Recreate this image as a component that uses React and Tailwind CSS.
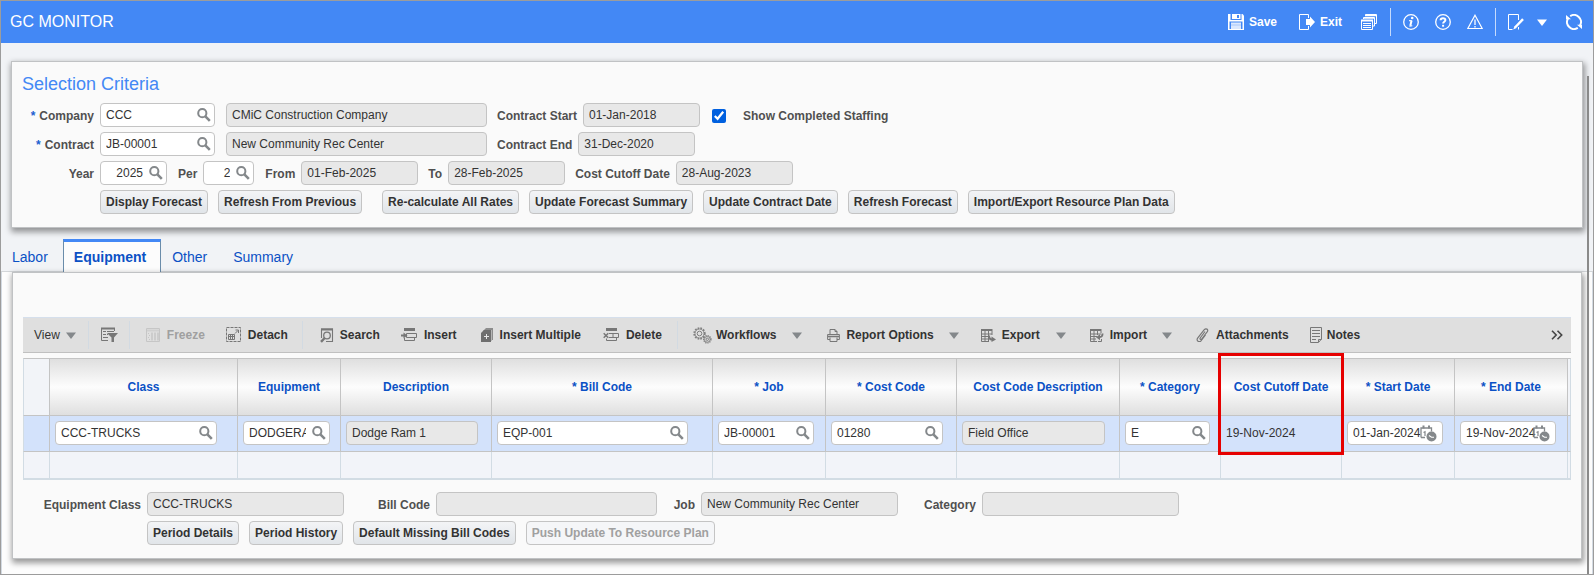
import React from "react";

const SearchIcon = () => (
  <svg width="14" height="14" viewBox="0 0 14 14" fill="none" stroke="#84888b">
    <circle cx="5.3" cy="5.2" r="4.1" strokeWidth="2" />
    <path d="M8.4 8.4 12.8 12.8" strokeWidth="2.6" />
  </svg>
);

const DateIcon = () => (
  <svg width="17" height="17" viewBox="0 0 17 17" fill="none">
    <path d="M1 12.500V3h10.500v3.500M1 12.500h4" stroke="#84888b" strokeWidth="1.300" />
    <path d="M3.500 .5v3M9 .5v3" stroke="#84888b" strokeWidth="2" />
    <path d="M3.500 7.500 5 6.800V11" stroke="#84888b" strokeWidth="1.200" />
    <circle cx="11.500" cy="11.500" r="5" fill="#84888b" />
    <path d="M9 10.500 11.500 12.200H14" stroke="#fff" strokeWidth="1.100" />
  </svg>
);

const Caret = ({ className = "text-[#84888b]" }) => (
  <svg width="10" height="7" viewBox="0 0 10 7" className={className}>
    <path d="M0 .5h10L5 7z" fill="currentColor" />
  </svg>
);

/* ---- application bar icons ---- */

const SaveIcon = () => (
  <svg width="16" height="16" viewBox="0 0 16 16">
    <path d="M0 0h14.500L16 1.500V16H0z" fill="#fff" />
    <path d="M2.500 0h11v6h-11z" fill="#4388f5" />
    <path d="M4 0h8.500v5H4z" fill="#fff" />
    <path d="M9 1h2v3H9z" fill="#4388f5" />
    <path d="M1.500 7.500h13V15h-13z" fill="#4388f5" />
    <path d="M3 8.500h10V15H3z" fill="#dbe8fe" />
    <path d="M3 10.500h10v1H3z" fill="#a9c8fb" />
  </svg>
);

const ExitIcon = () => (
  <svg width="16" height="16" viewBox="0 0 16 16" fill="none">
    <path d="M9.500 4V.5h-9v15h9V12" stroke="#fff" />
    <path d="M7 5h4V2.500L16 8l-5 5.500V11H7z" fill="#fff" />
  </svg>
);

const WindowsIcon = () => (
  <svg width="16" height="16" viewBox="0 0 16 16" fill="none" stroke="#fff">
    <path d="M4.500 2V.5h11v9H14" />
    <path d="M4 1.500h11" strokeWidth="1.500" />
    <path d="M2.500 5V3.500h11V12H12" />
    <path d="M3 4h10" strokeWidth="1.500" />
    <path d="M.5 6.500h11v9H.5z" />
    <path d="M0 6.500h12" strokeWidth="2" />
    <path d="M2 9.500h8M2 11.500h8M2 13.500h8" />
  </svg>
);

const InfoIcon = () => (
  <svg width="16" height="16" viewBox="0 0 16 16" fill="none" stroke="#fff">
    <circle cx="8" cy="8" r="7.300" strokeWidth="1.300" />
    <circle cx="9.200" cy="4" r="1.300" fill="#fff" stroke="none" />
    <path d="M6 6.700h2.700" strokeWidth="1.100" />
    <path d="M8.600 6.500 7.300 11.800" strokeWidth="2" />
    <path d="M6.400 12.300 9.300 11.800" strokeWidth="1.100" />
  </svg>
);

const HelpIcon = () => (
  <svg width="16" height="16" viewBox="0 0 16 16" fill="none" stroke="#fff">
    <circle cx="8" cy="8" r="7.300" strokeWidth="1.300" />
    <path d="M5.600 6.300C5.600 3.500 10.400 3.500 10.400 6c0 1.700-2.300 1.700-2.300 3.600" strokeWidth="2" />
    <path d="M7.100 10.800h2v1.900h-2z" fill="#fff" stroke="none" />
  </svg>
);

const WarnIcon = () => (
  <svg width="16" height="16" viewBox="0 0 16 16" fill="none" stroke="#fff">
    <path d="M8 1.200 15.200 14.500H.8z" strokeWidth="1.200" />
    <path d="M8 5.500V11M8 12v1.500" strokeWidth="1.300" />
  </svg>
);

const EditIcon = () => (
  <svg width="16" height="16" viewBox="0 0 16 16" fill="none" stroke="#fff">
    <path d="M10.500 6V.5H.5v15h4" />
    <path d="M7 13.500 15 5.200" strokeWidth="2.400" />
    <path d="M5.200 15.500 8.500 14 6.600 12.200z" fill="#fff" stroke="none" />
    <path d="M10.500 15.500V13" />
  </svg>
);

const RefreshIcon = () => (
  <svg width="16" height="16" viewBox="0 0 16 16" fill="none" stroke="#fff" strokeWidth="1.900">
    <path d="M4.200 2.100A7 7 0 0 1 14 11.500M11.800 13.900A7 7 0 0 1 2 4.500" />
    <path d="M11 10.800h5v4.200zM5 5.200H0V1z" fill="#fff" stroke="none" />
  </svg>
);

/* ---- table toolbar icons ---- */

const FilterIcon = () => (
  <svg width="17" height="16" viewBox="0 0 17 16" fill="none" stroke="#777">
    <path d="M0 1.500h14" strokeWidth="2" />
    <path d="M.5 2v11.500H7M13.500 2v2M2 4.500h3M6 4.500h7M2 7.500h3M2 10.500h3M5 10.500h2M6 7.500h1" />
    <path d="M6 6h11l-4 4.500V15h-2.500v-4.500z" fill="#777" stroke="none" />
  </svg>
);

const FreezeIcon = () => (
  <svg width="15" height="14" viewBox="0 0 15 14" fill="none" stroke="#c6c6c6">
    <path d="M.5.5h13v13H.5z" />
    <path d="M1 2.500h12" strokeWidth="2" stroke="#d0d0d0" />
    <path d="M6 4.500v8M9 4.500v8M12 4.500v8" strokeWidth="1.500" />
    <path d="M2 5.500h1M3 7.500h1M2 9.500h1M3 11.500h1" />
  </svg>
);

const DetachIcon = () => (
  <svg width="16" height="16" viewBox="0 0 16 16" fill="none" stroke="#777">
    <path d="M.5.5h14v14H.5z" strokeDasharray="3 1" />
    <path d="M2.500 7.500h6v5h-6zM2.500 9.500h6M4.500 8v5M6.500 8v5" />
    <path d="M9 6.500 12 3.500M9.500 3h3v3" />
  </svg>
);

const FindIcon = () => (
  <svg width="14" height="15" viewBox="0 0 14 15" fill="none" stroke="#777">
    <path d="M1.500 10V1h11v12.500H6" strokeWidth="1.100" />
    <path d="M1 1.500h12" strokeWidth="2" />
    <circle cx="7" cy="7.500" r="3.300" strokeWidth="1.300" />
    <path d="M4.700 10 1 13.800" strokeWidth="2.400" />
  </svg>
);

const InsertIcon = () => (
  <svg width="17" height="14" viewBox="0 0 17 14" fill="none" stroke="#777">
    <path d="M3 1.500h11" strokeWidth="3" />
    <path d="M5.500 5.500h10v4h-10z" />
    <path d="M0 7.500h4" strokeWidth="2" />
    <path d="M2.500 4.500 6.500 7.500 2.500 10.500z" fill="#777" stroke="none" />
    <path d="M3.500 10v2.500h10V10" />
  </svg>
);

const InsertMultipleIcon = () => (
  <svg width="13" height="14" viewBox="0 0 13 14" fill="none">
    <path d="M5 0h7v12H2V3z" fill="#8c8c8c" />
    <path d="M3 2h7v12H0V5z" fill="#6f6f6f" />
    <path d="M3 8.500h5M5.500 6v5" stroke="#e8e8e8" />
    <path d="M10.500 2v11" stroke="#b5b5b5" />
  </svg>
);

const DeleteIcon = () => (
  <svg width="17" height="14" viewBox="0 0 17 14" fill="none" stroke="#777">
    <path d="M3 1.500h11" strokeWidth="3" />
    <path d="M6 5.500h9.500v4H6" />
    <path d="m.7 5.200 4.600 4.600M5.300 5.200.7 9.800" strokeWidth="1.500" />
    <path d="M3.500 10.500v2h10V10M10 5.500v4" />
  </svg>
);

const GearsIcon = () => (
  <svg width="19" height="17" viewBox="0 0 19 17" fill="none" stroke="#808080">
    <circle cx="6.500" cy="6.500" r="5.300" strokeWidth="1.800" strokeDasharray="1.700 1.100" />
    <circle cx="6.500" cy="6.500" r="4.500" strokeWidth=".8" />
    <circle cx="6.500" cy="6.500" r="2.300" />
    <circle cx="14.300" cy="12.300" r="3.600" strokeWidth="1.400" strokeDasharray="1.300 .8" />
    <circle cx="14.300" cy="12.300" r="2.800" strokeWidth=".8" />
    <circle cx="14.300" cy="12.300" r="1.200" />
  </svg>
);

const PrintIcon = () => (
  <svg width="13" height="13" viewBox="0 0 13 13" fill="none" stroke="#777">
    <path d="M3 5V.5h5L10 2.500V5M8 .5v2h2" />
    <path d="M3 10.500H.6v-5h11.800v5H10" />
    <path d="M1 7.500h11" strokeWidth="1.500" />
    <path d="M3 8.500v4h7v-4" />
  </svg>
);

const ExportIcon = () => (
  <svg width="15" height="13" viewBox="0 0 15 13" fill="none" stroke="#777">
    <path d="M0 1h11.500" strokeWidth="2" />
    <path d="M.5 2v10.500H8M.5 5h10.500M.5 7.500H8M.5 10H7M4 2v10.500M7.500 2v10M11 2v4" />
    <path d="M8 6.500c0 3 1 4 3 4" strokeWidth="2" />
    <path d="M10.500 7.500 15 10.500 10.500 13z" fill="#777" stroke="none" />
  </svg>
);

const ImportIcon = () => (
  <svg width="14" height="13" viewBox="0 0 14 13" fill="none" stroke="#777">
    <path d="M0 1h11.500" strokeWidth="2" />
    <path d="M.5 2v10.500H7M.5 5h10.500M.5 7.500H7M.5 10H6M4 2v10.500M7.500 2v4M11 2v2" />
    <path d="M12.500 4.500c0 3-1 3.500-3.500 3.500" strokeWidth="2" />
    <path d="M10 5.200 6 8.200l4 3z" fill="#777" stroke="none" />
    <path d="M8 12.500h3.500V10" />
  </svg>
);

const ClipIcon = () => (
  <svg width="13" height="14" viewBox="0 0 13 14" fill="none" stroke="#777" strokeWidth="1.200">
    <path d="M9 3.500 4.200 10c-.8 1.200.7 2 1.500 1L11.300 3.700C12.800 1.500 10 -.3 8.300 1.700L1.800 9.800C-.5 13 3.500 15 5.300 12.500L9.500 7" />
  </svg>
);

const NotesIcon = () => (
  <svg width="13" height="16" viewBox="0 0 13 16" fill="none" stroke="#777">
    <path d="M.5.5h11v11.500L8.500 15.500H.5z" />
    <path d="M8.500 15V12.500h3" />
    <path d="M2 3.500h8M2 6.500h8M2 9.500h8M2 12.500h4" />
  </svg>
);

const MoreIcon = () => (
  <svg width="12" height="10" viewBox="0 0 12 10" fill="none" stroke="#444" strokeWidth="1.600">
    <path d="M1 .7 5.200 5 1 9.300M6.500.7 10.700 5 6.500 9.300" />
  </svg>
);

/* ---- form parts ---- */

function Label({ htmlFor, required, className = "", children }) {
  return (
    <label htmlFor={htmlFor} className={`shrink-0 pt-0.5 text-right font-bold text-[#505050] ${className}`}>
      {required && <span className="mr-1 text-[#1b5fd0]">*</span>}
      {children}
    </label>
  );
}

function Lookup({ id, value, width, label, align = "" }) {
  return (
    <div className={`flex h-6 shrink-0 items-center rounded border border-[#c4c4c4] bg-white pr-[3px] pl-[5px] ${width}`}>
      <input id={id} aria-label={label} defaultValue={value} className={`w-0 min-w-0 flex-1 bg-transparent outline-none ${align}`} />
      <button type="button" aria-label="Search values" className="ml-1.5 shrink-0">
        <SearchIcon />
      </button>
    </div>
  );
}

function ReadOnly({ id, value, width, label }) {
  return (
    <input
      id={id}
      aria-label={label}
      readOnly
      defaultValue={value}
      className={`h-6 shrink-0 rounded border border-[#c4c4c4] bg-[#e8e8e8] px-[5px] outline-none ${width}`}
    />
  );
}

function DateField({ value, label }) {
  return (
    <div className="flex h-6 w-24 items-center rounded border border-[#c4c4c4] bg-white px-[5px]">
      <input aria-label={label} defaultValue={value} className="w-0 min-w-0 flex-1 bg-transparent outline-none" />
      <button type="button" aria-label="Select date" className="-ml-[3px] shrink-0">
        <DateIcon />
      </button>
    </div>
  );
}

function Action({ className = "", disabled, children }) {
  return (
    <button
      type="button"
      disabled={disabled}
      className={`h-6 shrink-0 rounded border border-[#c4c4c4] px-[5px] font-bold whitespace-nowrap ${
        disabled ? "bg-[#f5f6f8] text-[#a0a0a0]" : "bg-linear-to-b from-[#f3f4f6] to-[#e1e5e9]"
      } ${className}`}
    >
      {children}
    </button>
  );
}

const Separator = ({ className = "" }) => <span className={`h-7 w-px shrink-0 bg-[#d2dae2] ${className}`} />;

function Tool({ icon, children, className = "", gap = "gap-1.5", disabled }) {
  return (
    <button
      type="button"
      disabled={disabled}
      className={`flex shrink-0 items-center font-bold whitespace-nowrap ${gap} ${disabled ? "text-[#a0a0a0]" : ""} ${className}`}
    >
      {icon}
      {children}
    </button>
  );
}

const columns = [
  ["Class", "w-[188px]"],
  ["Equipment", "w-[103px]"],
  ["Description", "w-[151px]"],
  ["* Bill Code", "w-[221px]"],
  ["* Job", "w-[113px]"],
  ["* Cost Code", "w-[131px]"],
  ["Cost Code Description", "w-[163px]"],
  ["* Category", "w-[101px]"],
  ["Cost Cutoff Date", "w-[121px]"],
  ["* Start Date", "w-[113px]"],
  ["* End Date", "w-[113px]"],
];

const cells = [
  <Lookup value="CCC-TRUCKS" width="w-[162px]" label="Class" />,
  <Lookup value="DODGERAM" width="w-[87px]" label="Equipment" />,
  <ReadOnly value="Dodge Ram 1" width="w-[132px]" label="Description" />,
  <Lookup value="EQP-001" width="w-[191px]" label="Bill Code" />,
  <Lookup value="JB-00001" width="w-24" label="Job" />,
  <Lookup value="01280" width="w-28" label="Cost Code" />,
  <ReadOnly value="Field Office" width="w-[143px]" label="Cost Code Description" />,
  <Lookup value="E" width="w-[85px]" label="Category" />,
  <span>19-Nov-2024</span>,
  <DateField value="01-Jan-2024" label="Start Date" />,
  <DateField value="19-Nov-2024" label="End Date" />,
];

function EquipmentTable() {
  return (
    <table className="mt-[5px] w-full table-fixed border-separate border-spacing-0">
      <thead>
        <tr className="h-[58px]">
          <th className="w-[27px] border border-[#c4c4c4] border-l-[#d2dce4] bg-[#f2f4f8]" />
          {columns.map(([name, width]) => (
            <th
              key={name}
              className={`relative border-t border-r border-b border-[#c4c4c4] bg-linear-to-b from-[#dfdfdf] via-[#fdfdfd] to-[#dfdfdf] p-0 text-center text-[#0b51c5] ${width}`}
            >
              {name}
              {name === "Cost Cutoff Date" && (
                <span className="pointer-events-none absolute -top-1.5 -left-[3px] z-10 h-[102px] w-[126px] border-3 border-[#e60000]" />
              )}
            </th>
          ))}
          <th className="w-[3px] border-t border-r border-b border-[#c4c4c4] border-r-[#d2dce4] bg-[#f2f4f8] p-0" />
        </tr>
      </thead>
      <tbody>
        <tr className="h-9 bg-[#d3e2fb]">
          <td className="border-r border-b border-l border-[#c4c4c4] border-l-[#d2dce4] p-0" />
          {cells.map((cell, i) => (
            <td key={i} className="border-r border-b border-[#c4c4c4] pt-[5px] pr-0 pb-0 pl-[5px] align-top">
              <div className="flex h-6 items-center">{cell}</div>
            </td>
          ))}
          <td className="border-r border-b border-[#c4c4c4] border-r-[#d2dce4] p-0" />
        </tr>
        <tr className="h-7 bg-[#f2f4f9]">
          <td className="border-r border-b-2 border-l border-[#d2dce4] p-0" />
          {cells.map((_, i) => (
            <td key={i} className="border-r border-b-2 border-[#d2dce4] p-0" />
          ))}
          <td className="border-r border-b-2 border-[#d2dce4] p-0" />
        </tr>
      </tbody>
    </table>
  );
}

const panel = "border border-[#c0c2c4] bg-[#fafafa] shadow-[1px_3px_6px_1px_rgba(0,0,0,0.4)]";

const tab = "flex items-center border-t-3";

export default function App() {
  return (
    <div className="relative flex min-h-screen flex-col border border-[#9c9c9c] bg-[#f1f3f6] font-['Liberation_Sans',Arial,sans-serif] text-xs text-[#333]">
      <header className="flex h-[42px] shrink-0 items-center bg-[#4388f5] pr-[11px] pl-[9px] font-bold text-white">
        <h1 className="mr-auto text-base font-normal">GC MONITOR</h1>
        <button type="button" className="flex items-center gap-[5px]"><SaveIcon />Save</button>
        <button type="button" className="ml-[22px] flex items-center gap-[5px]"><ExitIcon />Exit</button>
        <button type="button" aria-label="Windows" className="ml-[19px]"><WindowsIcon /></button>
        <span className="ml-[13px] h-7 w-px bg-[#c5dafc]" />
        <button type="button" aria-label="Information" className="ml-3"><InfoIcon /></button>
        <button type="button" aria-label="Help" className="ml-4"><HelpIcon /></button>
        <button type="button" aria-label="Warnings" className="ml-4"><WarnIcon /></button>
        <span className="ml-3 h-7 w-px bg-[#c5dafc]" />
        <button type="button" aria-label="Edit" className="ml-3"><EditIcon /></button>
        <button type="button" aria-label="More edit options" className="ml-[13px]"><Caret className="text-white" /></button>
        <button type="button" aria-label="Refresh" className="ml-[19px]"><RefreshIcon /></button>
      </header>

      <section className={`mx-2.5 mt-[18px] pt-2.5 pb-[13px] ${panel}`}>
        <h2 className="pl-2.5 text-lg leading-6 text-[#4388f5]">Selection Criteria</h2>
        <div className="mt-[7px] flex flex-col gap-[5px]">
          <div className="flex items-center">
            <Label htmlFor="company" required className="mr-1.5 w-[82px]">Company</Label>
            <Lookup id="company" value="CCC" width="w-[115px]" />
            <div className="ml-[11px] flex"><ReadOnly value="CMiC Construction Company" width="w-[261px]" label="Company name" /></div>
            <Label htmlFor="cstart" className="mr-1.5 ml-2.5">Contract Start</Label>
            <ReadOnly id="cstart" value="01-Jan-2018" width="w-[117px]" />
            <input id="completed" type="checkbox" defaultChecked className="mt-0.5 ml-3 size-3.5 accent-[#0060df]" />
            <Label htmlFor="completed" className="ml-[17px]">Show Completed Staffing</Label>
          </div>
          <div className="flex items-center">
            <Label htmlFor="contract" required className="mr-1.5 w-[82px]">Contract</Label>
            <Lookup id="contract" value="JB-00001" width="w-[115px]" />
            <div className="ml-[11px] flex"><ReadOnly value="New Community Rec Center" width="w-[261px]" label="Contract name" /></div>
            <Label htmlFor="cend" className="mr-1.5 ml-2.5">Contract End</Label>
            <ReadOnly id="cend" value="31-Dec-2020" width="w-[117px]" />
          </div>
          <div className="flex items-center">
            <Label htmlFor="year" className="mr-1.5 w-[82px]">Year</Label>
            <Lookup id="year" value="2025" width="w-[67px]" align="text-right" />
            <Label htmlFor="per" className="mr-1.5 ml-[11px]">Per</Label>
            <Lookup id="per" value="2" width="w-[51px]" align="text-right" />
            <Label htmlFor="from" className="mr-1.5 ml-[11px]">From</Label>
            <ReadOnly id="from" value="01-Feb-2025" width="w-[117px]" />
            <Label htmlFor="to" className="mr-1.5 ml-2.5">To</Label>
            <ReadOnly id="to" value="28-Feb-2025" width="w-[117px]" />
            <Label htmlFor="cutoff" className="mr-1.5 ml-2.5">Cost Cutoff Date</Label>
            <ReadOnly id="cutoff" value="28-Aug-2023" width="w-[117px]" />
          </div>
          <div className="flex gap-2.5 pl-[88px]">
            <Action>Display Forecast</Action>
            <Action className="mr-2.5">Refresh From Previous</Action>
            <Action>Re-calculate All Rates</Action>
            <Action>Update Forecast Summary</Action>
            <Action>Update Contract Date</Action>
            <Action>Refresh Forecast</Action>
            <Action>Import/Export Resource Plan Data</Action>
          </div>
        </div>
      </section>

      <nav className="mt-[11px] flex h-[33px] shrink-0 items-stretch border-b border-[#d3d6d9] text-sm text-[#0b51c5]">
        <a href="#labor" className={`${tab} border-t-transparent pr-[15px] pl-[11px]`}>Labor</a>
        <a href="#equipment" className={`${tab} -mb-px border-x border-x-[#6a8caa] border-t-[#4388f5] bg-[#fcfcfc] pr-3.5 pl-2.5 font-bold`}>Equipment</a>
        <a href="#other" className={`${tab} border-t-transparent px-[11px]`}>Other</a>
        <a href="#summary" className={`${tab} border-t-transparent px-[15px]`}>Summary</a>
      </nav>

      <main className="flex-1 border-x border-[#d3dae2] bg-[#fdfdfd] px-2.5 pb-[15px]">
        <section className={`px-2.5 pt-11 pb-[13px] ${panel}`}>
          <div className="flex h-9 items-center border-t border-b border-t-[#d5dfec] border-b-[#c0c0c0] bg-[#dfdfdf] pr-2 pl-[11px]">
            <button type="button" className="flex shrink-0 items-center gap-1.5">View<Caret /></button>
            <Separator className="ml-3" />
            <button type="button" aria-label="Filter" className="ml-3 shrink-0"><FilterIcon /></button>
            <Separator className="ml-[11px]" />
            <Tool icon={<FreezeIcon />} disabled className="ml-4">Freeze</Tool>
            <Tool icon={<DetachIcon />} className="ml-[21px]">Detach</Tool>
            <Separator className="ml-3.5" />
            <Tool icon={<FindIcon />} className="ml-[17px]">Search</Tool>
            <Tool icon={<InsertIcon />} className="ml-[21px]">Insert</Tool>
            <Tool icon={<InsertMultipleIcon />} className="ml-6">Insert Multiple</Tool>
            <Tool icon={<DeleteIcon />} className="ml-[22px]">Delete</Tool>
            <Separator className="ml-[15px]" />
            <Tool icon={<GearsIcon />} gap="gap-1" className="ml-[15px]">Workflows</Tool>
            <button type="button" aria-label="Workflow options" className="ml-4 shrink-0"><Caret /></button>
            <Tool icon={<PrintIcon />} className="ml-[25px]">Report Options</Tool>
            <button type="button" aria-label="Report menu" className="ml-[15px] shrink-0"><Caret /></button>
            <Tool icon={<ExportIcon />} className="ml-[22px]">Export</Tool>
            <button type="button" aria-label="Export menu" className="ml-4 shrink-0"><Caret /></button>
            <Tool icon={<ImportIcon />} className="ml-6">Import</Tool>
            <button type="button" aria-label="Import menu" className="ml-[15px] shrink-0"><Caret /></button>
            <Tool icon={<ClipIcon />} gap="gap-[7px]" className="ml-6">Attachments</Tool>
            <Tool icon={<NotesIcon />} gap="gap-1" className="ml-[21px]">Notes</Tool>
            <button type="button" aria-label="More tools" className="ml-auto shrink-0"><MoreIcon /></button>
          </div>

          <EquipmentTable />

          <div className="mt-3 flex items-center">
            <Label htmlFor="eqclass" className="mr-1.5 w-[118px]">Equipment Class</Label>
            <ReadOnly id="eqclass" value="CCC-TRUCKS" width="w-[197px]" />
            <Label htmlFor="billcode" className="mr-1.5 w-[86px]">Bill Code</Label>
            <ReadOnly id="billcode" value="" width="w-[221px]" />
            <Label htmlFor="job" className="mr-1.5 w-[38px]">Job</Label>
            <ReadOnly id="job" value="New Community Rec Center" width="w-[197px]" />
            <Label htmlFor="category" className="mr-1.5 w-[78px]">Category</Label>
            <ReadOnly id="category" value="" width="w-[197px]" />
          </div>
          <div className="mt-[5px] flex gap-2.5 pl-[124px]">
            <Action>Period Details</Action>
            <Action>Period History</Action>
            <Action>Default Missing Bill Codes</Action>
            <Action disabled>Push Update To Resource Plan</Action>
          </div>
        </section>
      </main>

      <div className="absolute top-[75px] right-1 bottom-0 w-0.5 bg-[#8a8a8a]" />
    </div>
  );
}
